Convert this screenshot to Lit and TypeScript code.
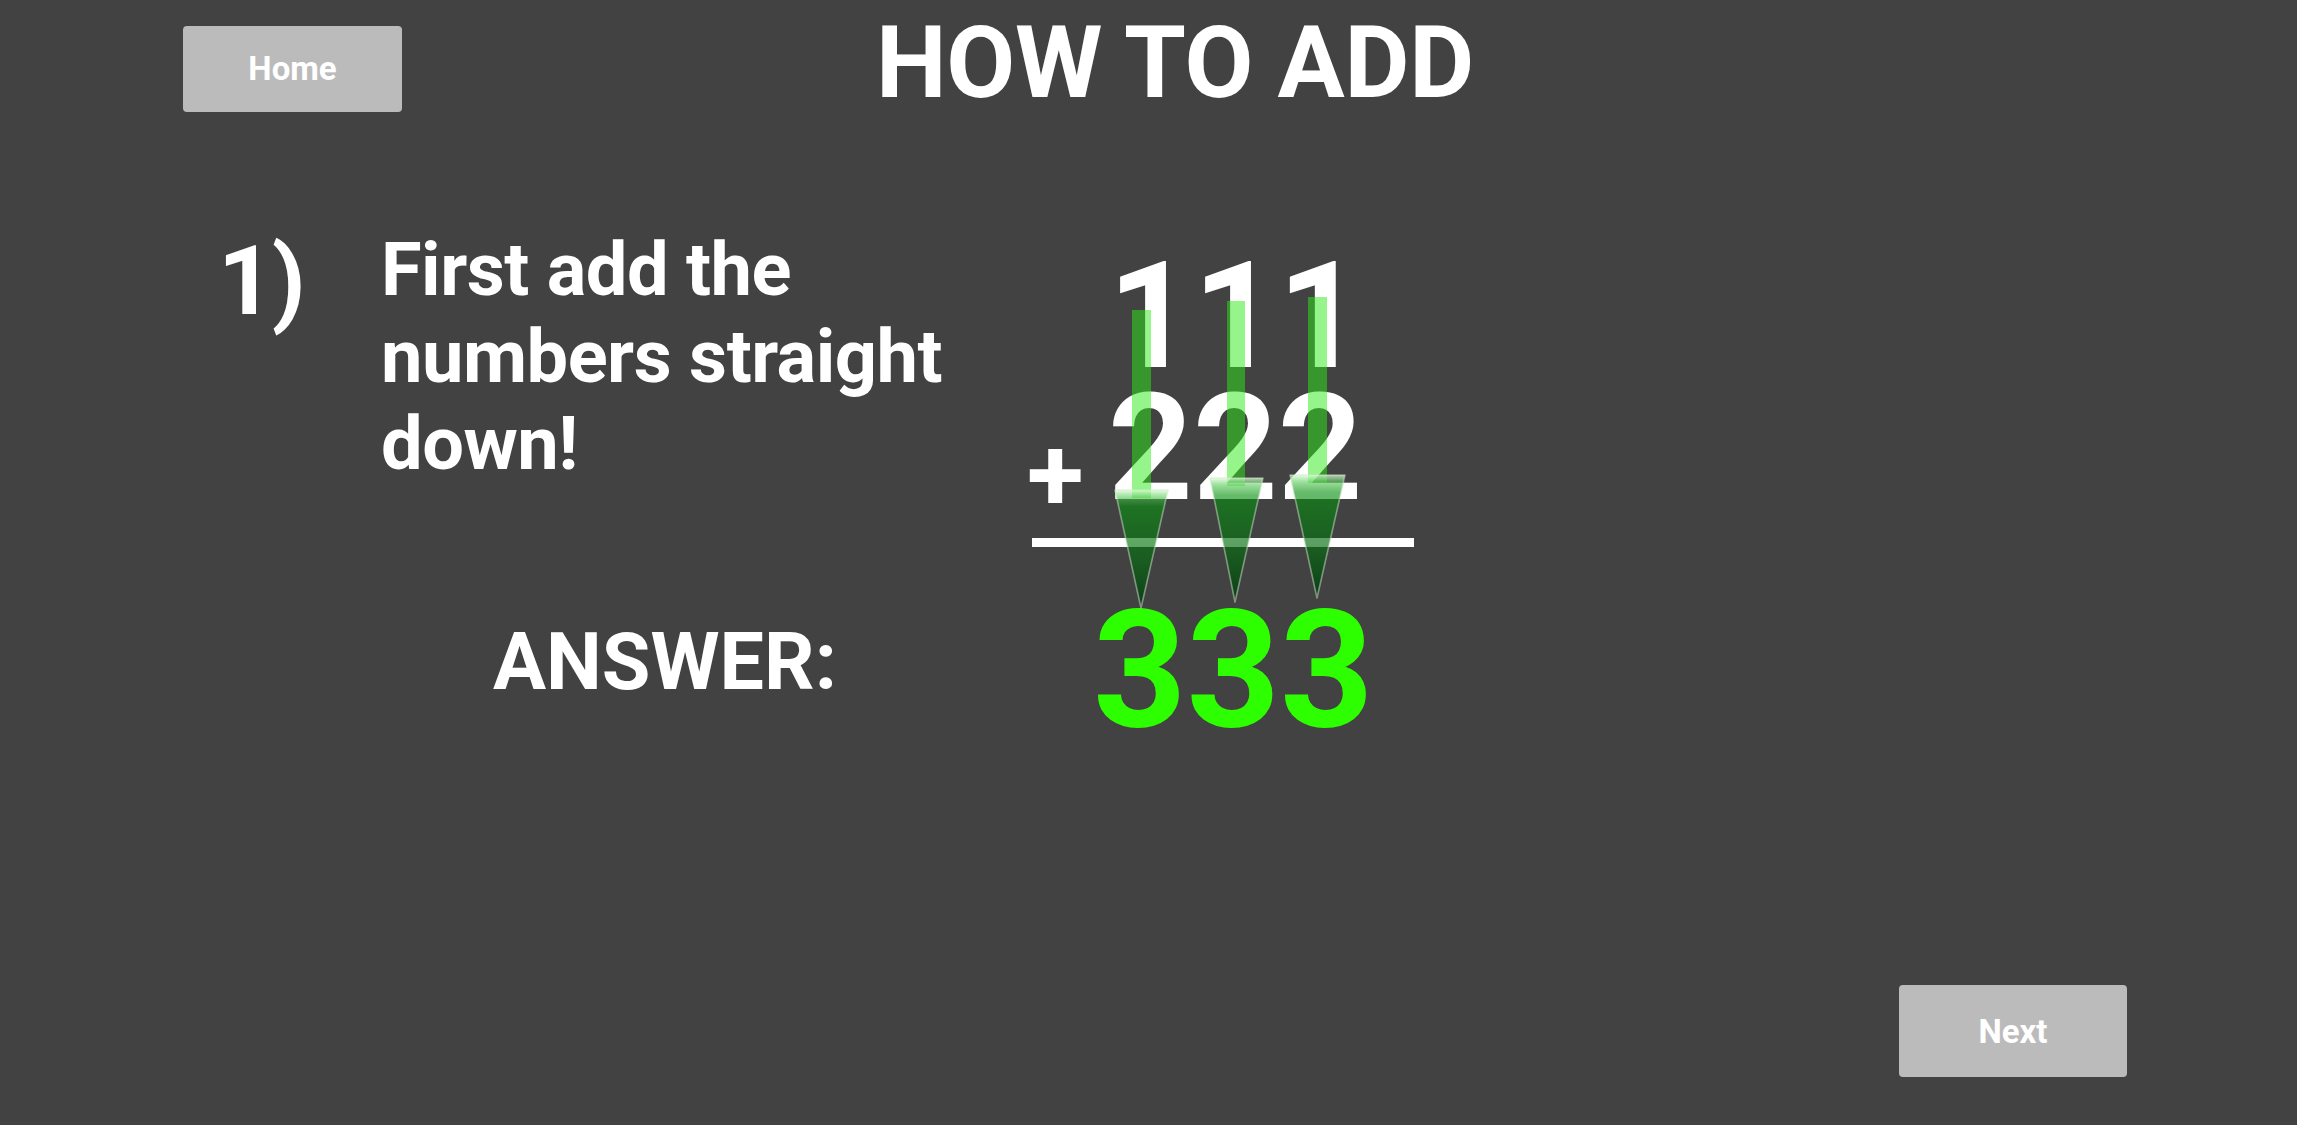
import { LitElement, html, css, svg } from "lit";
import { customElement } from "lit/decorators.js";

interface Arrow { id: string; shaftL: number; shaftR: number; shaftTop: number; headTop: number; headL: number; headR: number; tipX: number; tipY: number; }

// Coordinates are relative to the .sum box's drawing origin, at page (1020, 250).
const ARROWS: Arrow[] = [
  { id: "a", shaftL: 112, shaftR: 131, shaftTop: 60, headTop: 240, headL: 95, headR: 148, tipX: 121, tipY: 358 },
  { id: "b", shaftL: 207, shaftR: 225, shaftTop: 51, headTop: 228, headL: 190, headR: 243, tipX: 215, tipY: 352 },
  { id: "c", shaftL: 288, shaftR: 307, shaftTop: 47, headTop: 225, headL: 270, headR: 325, tipX: 297, tipY: 348 },
];

@customElement("app-root")
export class AppRoot extends LitElement {
  static styles = css`
    :host {
      display: block;
      width: 100%;
      min-height: 100vh;
      background: #424242;
      color: #fff;
      font-family: Roboto, "Liberation Sans", sans-serif;
    }
    .page {
      box-sizing: border-box;
      height: 1125px;
      padding: 26px 170px 48px 183px;
      display: flex;
      flex-direction: column;
    }
    .top {
      display: flex;
      align-items: flex-start;
      height: 86px;
    }
    .btn {
      display: flex;
      align-items: center;
      justify-content: center;
      background: #bbbbbb;
      border-radius: 4px;
      color: #fff;
      font-weight: 700;
      font-size: 33px;
    }
    .home { width: 219px; height: 86px; box-sizing: border-box; padding-bottom: 2px; }
    .next { width: 228px; height: 92px; }
    .title {
      margin: -23px 0 0 474px;
      font-size: 100px;
      font-weight: 700;
      line-height: 120px;
      letter-spacing: -0.3px;
      white-space: nowrap;
    }
    .lesson {
      display: flex;
      align-items: flex-start;
      margin-top: 138px;
    }
    .left { width: 837px; }
    .intro { display: flex; align-items: flex-start; height: 240px; }
    .step {
      width: 198px;
      padding-left: 35px;
      box-sizing: border-box;
      font-size: 97px;
      font-weight: 700;
      line-height: 114px;
      letter-spacing: -2px;
      margin-top: -26px;
    }
    .text {
      margin-top: -24px;
      font-size: 74px;
      font-weight: 700;
      line-height: 87px;
      letter-spacing: -0.5px;
      white-space: nowrap;
    }
    .answer {
      margin: 125px 0 0 310px;
      font-size: 79px;
      font-weight: 700;
      line-height: 94px;
      white-space: nowrap;
    }
    .sum {
      position: relative;
      width: 400px;
      margin-top: 1px;
    }
    .row {
      display: grid;
      grid-template-columns: 88px auto;
      height: 132px;
      font-size: 148px;
      font-weight: 700;
      line-height: 132px;
    }
    .plus { font-size: 104px; line-height: 104px; margin: 40px 0 0 7px; }
    .rule { height: 9px; width: 382px; margin: 23px 0 0 12px; background: #fff; }
    .result {
      margin: 39px 0 0 73px;
      color: #2eff00;
      font-size: 163px;
      font-weight: 700;
      line-height: 170px;
    }
    .arrows { position: absolute; left: 0; top: -1px; width: 400px; height: 480px; overflow: visible; }
    .foot { margin-top: auto; display: flex; justify-content: flex-end; }
  `;

  private arrow(a: Arrow) {
    return svg`
      <linearGradient id="head-${a.id}" gradientUnits="userSpaceOnUse" x1="0" x2="0" y1=${a.headTop} y2=${a.tipY}>
        <stop offset="0" stop-color="#e2ffdc" stop-opacity=".75"/>
        <stop offset=".07" stop-color="#48c048" stop-opacity=".6"/>
        <stop offset=".14" stop-color="#089010" stop-opacity=".62"/>
        <stop offset=".6" stop-color="#056910" stop-opacity=".66"/>
        <stop offset="1" stop-color="#023b0f" stop-opacity=".85"/>
      </linearGradient>
      <rect x=${a.shaftL} y=${a.shaftTop} width=${a.shaftR - a.shaftL} height=${a.headTop - a.shaftTop + 8} fill="#2ceb18" fill-opacity=".5"/>
      <path d="M${a.headL} ${a.headTop}L${a.headR} ${a.headTop}L${a.tipX} ${a.tipY}Z" fill="url(#head-${a.id})" stroke="#cfe6cc" stroke-opacity=".5" stroke-width="1.6" stroke-linejoin="round"/>
    `;
  }

  render() {
    return html`
      <div class="page">
        <div class="top">
          <div class="btn home">Home</div>
          <div class="title">HOW TO ADD</div>
        </div>
        <div class="lesson">
          <div class="left">
            <div class="intro">
              <div class="step">1)</div>
              <div class="text">First add the<br />numbers straight<br />down!</div>
            </div>
            <div class="answer">ANSWER:</div>
          </div>
          <div class="sum">
            <div class="row"><span></span><span>111</span></div>
            <div class="row"><span class="plus">+</span><span>222</span></div>
            <div class="rule"></div>
            <div class="result">333</div>
            <svg class="arrows" viewBox="0 0 400 480" aria-hidden="true">${ARROWS.map((a) => this.arrow(a))}</svg>
          </div>
        </div>
        <div class="foot"><div class="btn next">Next</div></div>
      </div>
    `;
  }
}
